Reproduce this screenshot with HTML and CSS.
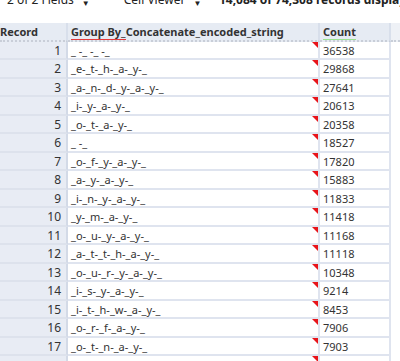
FILE: index.html
```html
<!DOCTYPE html>
<html lang="en">
<head>
  <meta charset="UTF-8" />
  <title>Results</title>
  <link rel="stylesheet" href="styles.css">
</head>
<body>
  <div class="toolbar">
    <span class="tb-text">2 of 2 Fields</span>
    <span class="caret">&#9660;</span>
    <svg class="diamond" width="16" height="14" viewBox="0 0 16 14">
      <path d="M8 -6 L16 4 L8 14 L0 4 Z" fill="#b9b9b9"/>
      <path d="M3 2 L8 8 L13 2" stroke="#fff" stroke-width="2" fill="none"/>
    </svg>
    <span class="sep"></span>
    <span class="tb-text viewer">Cell Viewer</span>
    <span class="caret">&#9660;</span>
    <span class="tb-text status">* 14,084 of 74,308 records displayed</span>
  </div>

  <div class="grid" id="grid">
    <div class="hd rec">Record</div>
    <div class="hd"><span class="mark red">Group By_</span>Concatenate_encoded_string</div>
    <div class="hd"><span class="mark green">Count</span></div>
    <div class="hd blank"></div>
  </div>

  <script>
    const rows = [
      ["_ -_ -_ -_", 36538],
      ["_e-_t-_h-_a-_y-_", 29868],
      ["_a-_n-_d-_y-_a-_y-_", 27641],
      ["_i-_y-_a-_y-_", 20613],
      ["_o-_t-_a-_y-_", 20358],
      ["_ -_", 18527],
      ["_o-_f-_y-_a-_y-_", 17820],
      ["_a-_y-_a-_y-_", 15883],
      ["_i-_n-_y-_a-_y-_", 11833],
      ["_y-_m-_a-_y-_", 11418],
      ["_o-_u-_y-_a-_y-_", 11168],
      ["_a-_t-_t-_h-_a-_y-_", 11118],
      ["_o-_u-_r-_y-_a-_y-_", 10348],
      ["_i-_s-_y-_a-_y-_", 9214],
      ["_i-_t-_h-_w-_a-_y-_", 8453],
      ["_o-_r-_f-_a-_y-_", 7906],
      ["_o-_t-_n-_a-_y-_", 7903],
      ["", ""]
    ];
    const grid = document.getElementById("grid");
    rows.forEach((r, i) => {
      const html =
        '<div class="cell rec">' + (r[1] === "" ? "" : i + 1) + '</div>' +
        '<div class="cell str">' + r[0] + '<span class="flag"></span></div>' +
        '<div class="cell num">' + r[1] + '</div>' +
        '<div class="cell blank"></div>';
      grid.insertAdjacentHTML("beforeend", html);
    });
  </script>
</body>
</html>
```

FILE: styles.css
```css
body {
  margin: 0;
  font-family: "Noto Sans", "Open Sans", sans-serif;
  font-size: 11px;
  color: #333;
  background: #fff;
  overflow: hidden;
}

.toolbar {
  height: 23px;
  display: flex;
  align-items: flex-start;
  background: #fff;
  overflow: hidden;
}

.toolbar > * {
  margin-top: -9px;
}

.tb-text {
  font-size: 12px;
  color: #222;
  white-space: nowrap;
}

.toolbar > .tb-text:first-child {
  margin-left: 7px;
}

.caret {
  font-size: 8px;
  margin-left: 8px;
  margin-top: -3px;
  color: #222;
}

.diamond {
  margin-left: 6px;
  margin-top: 0;
}

.sep {
  width: 1px;
  height: 12px;
  background: #c8c8c8;
  margin: 0 13px 0 15px;
}

.status {
  font-weight: bold;
  margin-left: 8px;
}

.grid {
  display: grid;
  grid-template-columns: 68px 252px 71px 1fr;
  grid-auto-rows: 18.5px;
}

.hd {
  height: 19px;
  background: #e6ebf3;
  font-weight: bold;
  padding: 0 0 0 3px;
  line-height: 18px;
  border-right: 2px solid #d8dfeb;
  border-bottom: 2px dotted #c9ced8;
  box-sizing: border-box;
  white-space: nowrap;
  overflow: hidden;
}

.hd.rec {
  padding-left: 0;
}

.hd.blank {
  border-right: none;
  background: #eef1f6;
}

.mark {
  border-bottom: 2px solid;
}

.mark.red {
  border-color: #e43a3a;
}

.mark.green {
  border-color: #9be28f;
}

.cell {
  position: relative;
  line-height: 18px;
  border-right: 2px solid #dfe4ef;
  border-bottom: 2px solid #dfe4ef;
  box-sizing: border-box;
  padding-left: 3px;
  white-space: pre;
  overflow: hidden;
  background: #fff;
}

.cell.rec {
  background: #e8ecf4;
  text-align: right;
  padding-right: 5px;
  font-size: 12px;
  border-bottom-color: #dde2ec;
  border-right-color: #d3dae7;
}

.cell.blank {
  border-right: none;
  border-bottom: none;
  background: #fff;
}

.flag {
  position: absolute;
  top: 0;
  right: 0;
  width: 0;
  height: 0;
  border-top: 6px solid #e8141a;
  border-left: 6px solid transparent;
}
```
